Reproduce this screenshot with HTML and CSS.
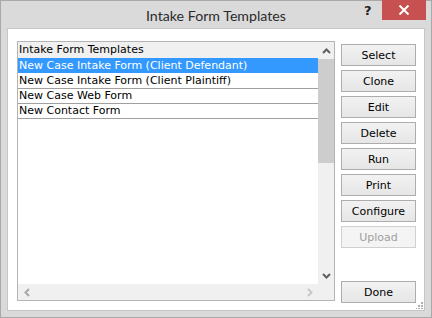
FILE: index.html
```html
<!DOCTYPE html>
<html>
<head>
<meta charset="utf-8">
<link rel="stylesheet" href="styles.css">
</head>
<body>
<div class="window">
  <div class="titlebar">
    <div class="title">Intake Form Templates</div>
    <div class="help">?</div>
    <div class="close">
      <svg width="12" height="10" viewBox="0 0 12 10"><path d="M1.5 0.5 L10.5 9.5 M10.5 0.5 L1.5 9.5" stroke="#fff" stroke-width="2"/></svg>
    </div>
  </div>
  <div class="client">
    <div class="listbox">
      <div class="list-main">
        <div class="rows">
          <div class="row header">Intake Form Templates</div>
          <div class="row selected">New Case Intake Form (Client Defendant)</div>
          <div class="row">New Case Intake Form (Client Plaintiff)</div>
          <div class="row">New Case Web Form</div>
          <div class="row">New Contact Form</div>
        </div>
        <div class="vscroll">
          <div class="sarrow">
            <svg width="9" height="6" viewBox="0 0 9 6"><path d="M1 5 L4.5 1.5 L8 5" stroke="#606060" stroke-width="2" fill="none"/></svg>
          </div>
          <div class="thumb"></div>
          <div class="track"></div>
          <div class="sarrow">
            <svg width="9" height="6" viewBox="0 0 9 6"><path d="M1 1 L4.5 4.5 L8 1" stroke="#606060" stroke-width="2" fill="none"/></svg>
          </div>
        </div>
      </div>
      <div class="list-bottom">
        <div class="hscroll">
          <div class="harrow">
            <svg width="6" height="9" viewBox="0 0 6 9"><path d="M5 1 L1.5 4.5 L5 8" stroke="#a8a8a8" stroke-width="2" fill="none"/></svg>
          </div>
          <div class="harrow">
            <svg width="6" height="9" viewBox="0 0 6 9"><path d="M1 1 L4.5 4.5 L1 8" stroke="#c8c8c8" stroke-width="2" fill="none"/></svg>
          </div>
        </div>
        <div class="corner"></div>
      </div>
    </div>
    <div class="buttons">
      <button class="btn">Select</button>
      <button class="btn">Clone</button>
      <button class="btn">Edit</button>
      <button class="btn">Delete</button>
      <button class="btn">Run</button>
      <button class="btn">Print</button>
      <button class="btn">Configure</button>
      <button class="btn disabled">Upload</button>
      <button class="btn done">Done</button>
    </div>
    <div class="grip">
      <svg width="7" height="7" viewBox="0 0 7 7" fill="#b0b0b0">
        <rect x="5" y="0" width="2" height="2"/>
        <rect x="2" y="3" width="2" height="2"/><rect x="5" y="3" width="2" height="2"/>
        <rect x="-1" y="6" width="2" height="2"/><rect x="2" y="6" width="2" height="2"/><rect x="5" y="6" width="2" height="2"/>
      </svg>
    </div>
  </div>
</div>
</body>
</html>
```

FILE: styles.css
```css
* { box-sizing: border-box; }
html, body { margin: 0; padding: 0; background: #fff; }
.window {
  width: 432px;
  height: 318px;
  background: #dadada;
  border: 1px solid #a9a9a9;
  display: flex;
  flex-direction: column;
  position: relative;
}
.titlebar {
  height: 27px;
  flex: none;
  position: relative;
  display: flex;
  align-items: center;
  justify-content: center;
}
.title {
  font-family: "Lato", "Open Sans", sans-serif;
  font-size: 14.2px;
  color: #2b2b2b;
  margin-top: 2px;
}
.help {
  position: absolute;
  left: 363px;
  top: 2px;
  font-family: "DejaVu Sans", sans-serif;
  font-weight: bold;
  font-size: 13px;
  color: #222;
}
.close {
  position: absolute;
  left: 381px;
  top: -1px;
  width: 44px;
  height: 20px;
  background: #c75050;
  display: flex;
  align-items: center;
  justify-content: center;
}
.client {
  margin: 0 6px 6px 6px;
  height: 283px;
  flex: none;
  background: #fff;
  border: 1px solid #c6c6c6;
  display: flex;
  align-items: flex-start;
  padding: 12px 8px 9px 9px;
  gap: 6px;
  position: relative;
}
.listbox {
  width: 318px;
  height: 260px;
  flex: none;
  border: 1px solid #b4b4b4;
  display: flex;
  flex-direction: column;
}
.list-main {
  flex: 1;
  display: flex;
}
.rows {
  width: 300px;
  font-family: "DejaVu Sans", sans-serif;
  font-size: 11px;
  color: #000;
}
.row {
  height: 15px;
  line-height: 14px;
  padding-left: 1px;
  border-bottom: 1px solid #a0a0a0;
  white-space: nowrap;
}
.row.header {
  height: 16px;
  line-height: 16px;
  background: #f0f0f0;
  border-bottom: none;
}
.row.selected {
  height: 16px;
  line-height: 15px;
  background: #3399ff;
  background-clip: padding-box;
  color: #fff;
  border-bottom-color: #fff;
}
.vscroll {
  width: 16px;
  display: flex;
  flex-direction: column;
  background: #f0f0f0;
}
.sarrow {
  height: 17px;
  display: flex;
  align-items: center;
  justify-content: center;
}
.thumb {
  height: 104px;
  background: #cdcdcd;
}
.track { flex: 1; }
.list-bottom {
  height: 16px;
  display: flex;
}
.hscroll {
  width: 300px;
  background: #f0f0f0;
  display: flex;
  justify-content: space-between;
}
.harrow {
  width: 17px;
  display: flex;
  align-items: center;
  justify-content: center;
}
.corner {
  width: 16px;
  background: #f0f0f0;
}
.buttons {
  width: 75px;
  height: 262px;
  flex: none;
  display: flex;
  flex-direction: column;
  gap: 4px;
  padding-top: 3px;
}
.btn {
  height: 22px;
  flex: none;
  margin: 0;
  padding: 0;
  border: 1px solid #adadad;
  background: linear-gradient(#f2f2f2, #e6e6e6);
  font-family: "DejaVu Sans", sans-serif;
  font-size: 11px;
  color: #000;
}
.btn.disabled {
  color: #a0a0a0;
  border-color: #d0d0d0;
  background: #f4f4f4;
}
.btn.done { margin-top: auto; }
.grip {
  position: absolute;
  right: 1px;
  bottom: 1px;
  width: 7px;
  height: 7px;
  display: flex;
}
```
